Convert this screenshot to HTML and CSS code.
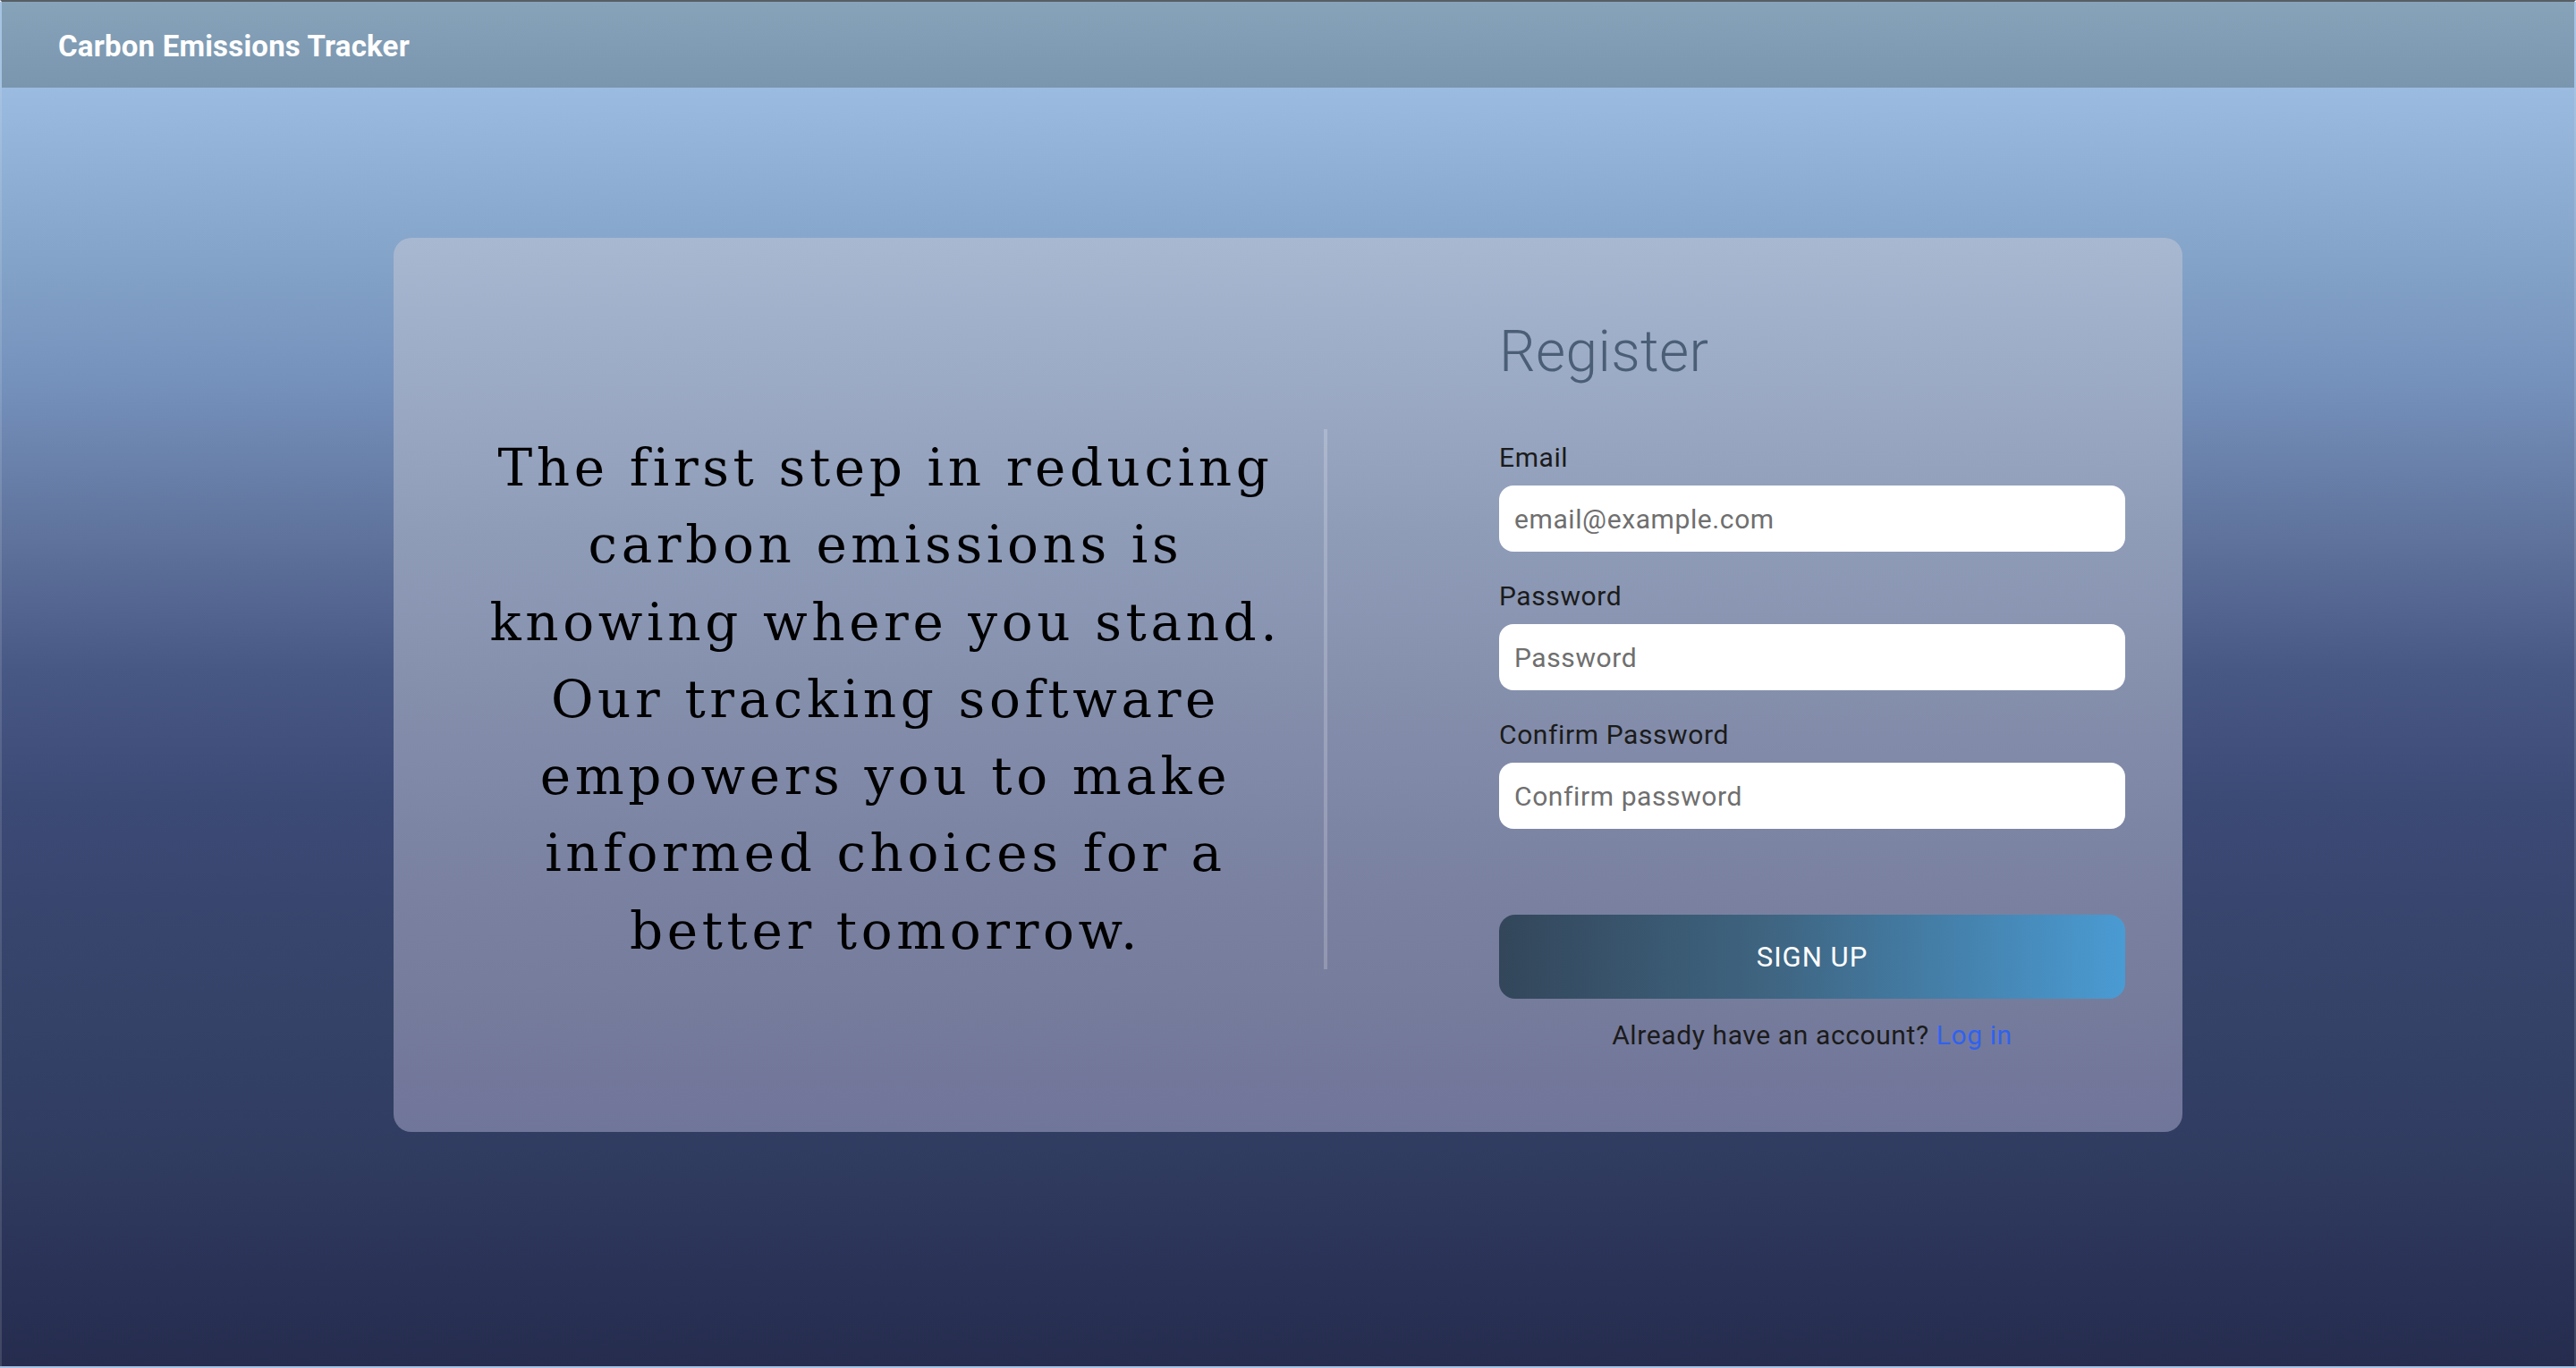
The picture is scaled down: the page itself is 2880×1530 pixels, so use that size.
FILE: index.html
```html
<!DOCTYPE html>
<html lang="en">
<head>
<meta charset="utf-8">
<title>Carbon Emissions Tracker</title>
<link rel="stylesheet" href="styles.css">
</head>
<body>
<div class="page">
  <header class="navbar">
    <span class="brand">Carbon Emissions Tracker</span>
  </header>
  <main class="main">
    <section class="card">
      <div class="quote-col">
        <p class="quote">The first step in reducing carbon emissions is knowing where you stand. Our tracking software empowers you to make informed choices for a better tomorrow.</p>
      </div>
      <form class="form">
        <h1 class="title">Register</h1>
        <label class="label" for="email">Email</label>
        <input class="input" id="email" type="email" placeholder="email@example.com">
        <label class="label" for="password">Password</label>
        <input class="input" id="password" type="password" placeholder="Password">
        <label class="label" for="confirm">Confirm Password</label>
        <input class="input" id="confirm" type="password" placeholder="Confirm password">
        <button class="btn" type="button">SIGN UP</button>
        <p class="alt">Already have an account? <a class="link" href="#">Log in</a></p>
      </form>
    </section>
  </main>
</div>
</body>
</html>
```
FILE: styles.css
```css
html, body {
  margin: 0;
  padding: 0;
  height: 100%;
}
body {
  font-family: Roboto, "Noto Sans", "Liberation Sans", sans-serif;
}
.page {
  box-sizing: border-box;
  height: 1530px;
  border-top: 2px solid #585d64;
  border-left: 2px solid rgba(255,255,255,0.12);
  border-right: 2px solid rgba(255,255,255,0.12);
  border-bottom: 2px solid rgba(255,255,255,0.12);
  background: linear-gradient(to bottom,
    #9bbbe0 0px,
    #9bbbe0 96px,
    #83a2c7 298px,
    #7592bd 420px,
    #5f739c 598px,
    #485885 748px,
    #3b4975 898px,
    #344267 1148px,
    #303b60 1298px,
    #252c4e 1528px);
  display: flex;
  flex-direction: column;
}
.navbar {
  box-sizing: border-box;
  height: 96px;
  flex: 0 0 96px;
  display: flex;
  align-items: center;
  padding: 3px 0 0 63px;
  background: linear-gradient(to bottom, #87a3ba, #7a96af);
}
.brand {
  color: #ffffff;
  font-weight: 700;
  font-size: 33px;
  letter-spacing: 0.2px;
  line-height: 1.2;
}
.main {
  flex: 1;
  display: flex;
  justify-content: center;
  padding-top: 168px;
}
.card {
  box-sizing: border-box;
  width: 2000px;
  height: 1000px;
  border-radius: 20px;
  background: linear-gradient(to bottom,
    #a8b8d1 0%,
    #8f9cb8 33%,
    #8590ad 50%,
    #7d85a4 66%,
    #777d9c 83%,
    #70759a 100%);
  display: flex;
  align-items: center;
  padding: 0 64px 0 60px;
  gap: 192px;
}
.quote-col {
  box-sizing: border-box;
  flex: 0 0 984px;
  border-right: 4px solid rgba(255,255,255,0.2);
  margin-top: 32px;
}
.quote {
  margin: 0;
  font-family: "DejaVu Serif", "Liberation Serif", serif;
  font-size: 58px;
  line-height: 86.3px;
  letter-spacing: 4.6px;
  text-align: center;
  color: #000000;
  padding: 0 30px;
}
.form {
  flex: 0 0 700px;
  display: flex;
  flex-direction: column;
}
.title {
  margin: 0 0 62px;
  font-size: 64px;
  font-weight: 300;
  letter-spacing: 0.4px;
  line-height: 1.2;
  color: #4a5e76;
}
.label {
  font-size: 30px;
  line-height: 36px;
  letter-spacing: 0.6px;
  color: #1b1b1b;
  margin-bottom: 13px;
}
.input {
  box-sizing: border-box;
  height: 74px;
  width: 100%;
  border: none;
  border-radius: 16px;
  background: #ffffff;
  padding: 0 17px;
  font-family: Roboto, "Noto Sans", sans-serif;
  font-size: 30px;
  letter-spacing: 0.6px;
  color: #222;
  margin: 0 0 32px;
  outline: none;
}
.input::placeholder {
  color: #6f6f6f;
}
.input:last-of-type {
  margin-bottom: 96px;
}
.btn {
  box-sizing: border-box;
  height: 94px;
  width: 100%;
  border: none;
  border-radius: 18px;
  background: linear-gradient(to right, #33465a, #3f6683 45%, #4a9bd3);
  color: #ffffff;
  font-family: Roboto, "Noto Sans", sans-serif;
  font-size: 31px;
  letter-spacing: 1px;
  cursor: pointer;
}
.alt {
  margin: 23px 0 0;
  text-align: center;
  font-size: 30px;
  line-height: 36px;
  letter-spacing: 0.6px;
  color: #1b1b1b;
}
.link {
  color: #2f62f0;
  text-decoration: none;
}
```
